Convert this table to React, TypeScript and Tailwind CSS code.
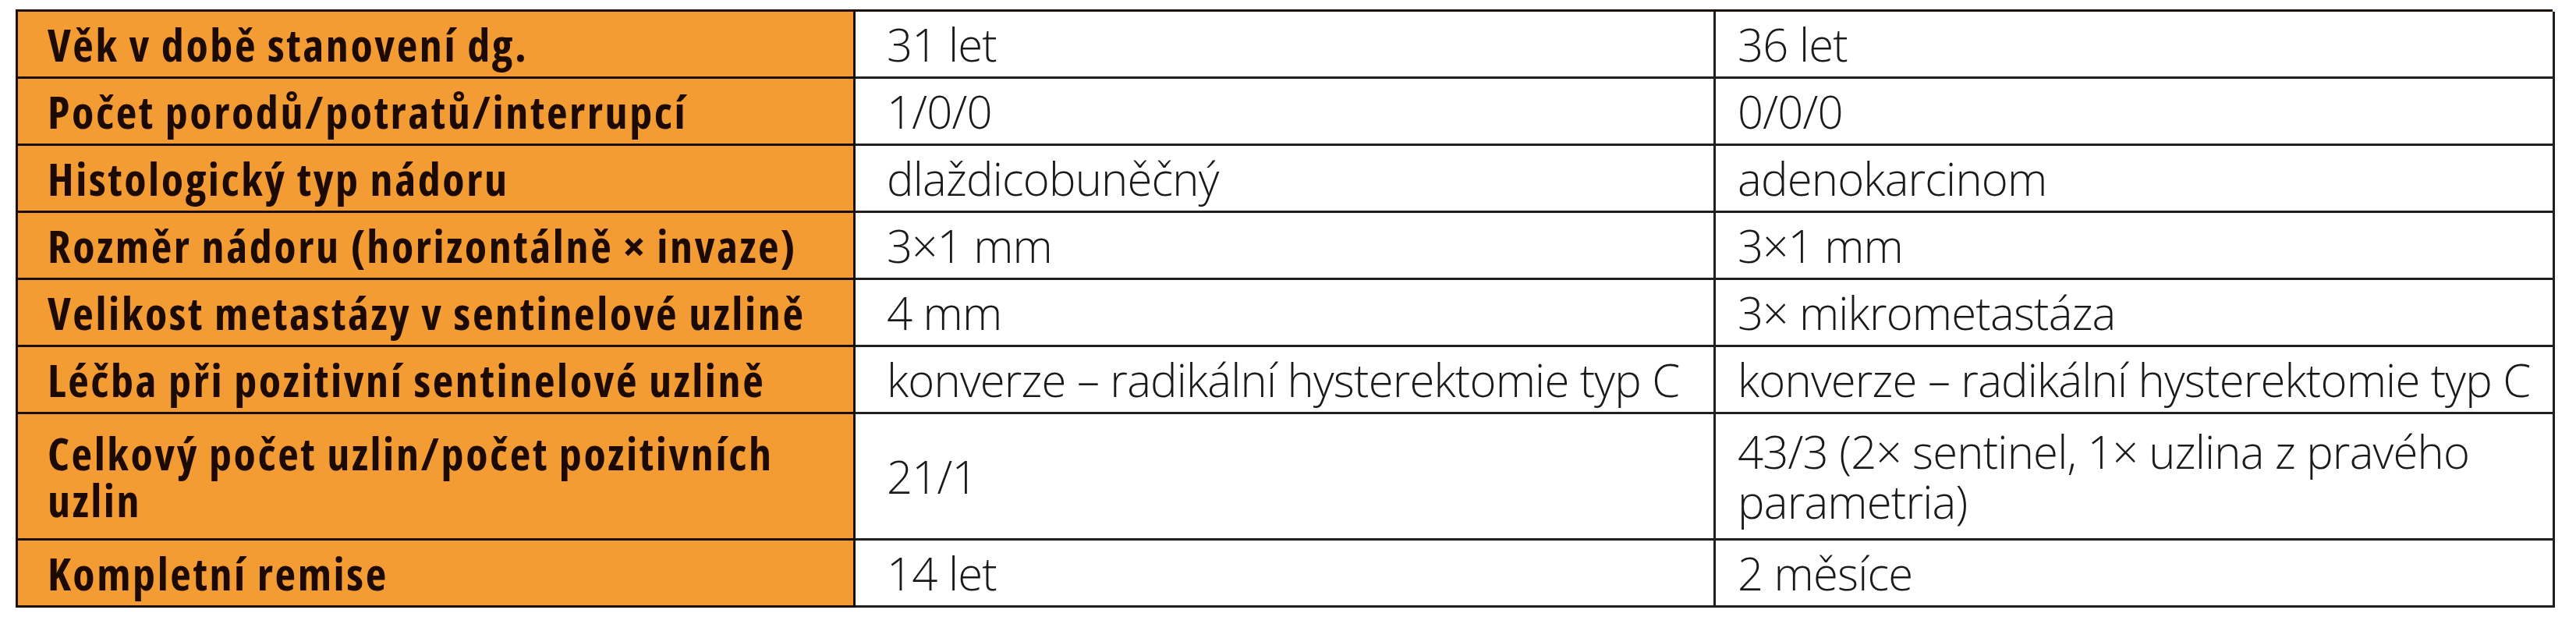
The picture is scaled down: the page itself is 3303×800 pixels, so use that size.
const rows: { label: string; a: string; b: string; tall?: boolean }[] = [
  { label: "Věk v době stanovení dg.", a: "31 let", b: "36 let" },
  { label: "Počet porodů/potratů/interrupcí", a: "1/0/0", b: "0/0/0" },
  { label: "Histologický typ nádoru", a: "dlaždicobuněčný", b: "adenokarcinom" },
  { label: "Rozměr nádoru (horizontálně × invaze)", a: "3×1 mm", b: "3×1 mm" },
  { label: "Velikost metastázy v sentinelové uzlině", a: "4 mm", b: "3× mikrometastáza" },
  {
    label: "Léčba při pozitivní sentinelové uzlině",
    a: "konverze – radikální hysterektomie typ C",
    b: "konverze – radikální hysterektomie typ C",
  },
  {
    label: "Celkový počet uzlin/počet pozitivních uzlin",
    a: "21/1",
    b: "43/3 (2× sentinel, 1× uzlina z pravého parametria)",
    tall: true,
  },
  { label: "Kompletní remise", a: "14 let", b: "2 měsíce" },
];

export default function App() {
  return (
    <div className="w-[3303px] h-[800px] bg-white pt-[12px] pl-[20px] font-['Open_Sans',sans-serif]">
      <div className="grid grid-cols-[1074px_1103px_1076px] w-[3253px] border-t-[3px] border-l-[3px] border-[#1c0c02]">
        {rows.map((r) => {
          const h = r.tall ? "h-[162px]" : "h-[86px] whitespace-nowrap";
          return (
            <div key={r.label} className="contents">
              <div
                className={`${h} flex items-center bg-[#f39c33] border-r-[3px] border-b-[3px] border-[#1c0c02] pl-[38px] pr-[8px] text-[58px] leading-[60px] font-bold font-stretch-condensed tracking-[2.6px] text-[#1c0a00]`}
              >
                {r.label}
              </div>
              <div
                className={`${h} flex items-center bg-white border-r-[3px] border-b-[3px] border-[#1f1f1f] pl-[40px] pr-[8px] text-[58px] leading-[64px] font-light tracking-[-0.8px] text-[#1a1a1a]`}
              >
                {r.a}
              </div>
              <div
                className={`${h} flex items-center bg-white border-r-[3px] border-b-[3px] border-[#1f1f1f] pl-[28px] pr-0 text-[58px] leading-[64px] font-light tracking-[-0.8px] text-[#1a1a1a]`}
              >
                {r.b}
              </div>
            </div>
          );
        })}
      </div>
    </div>
  );
}
